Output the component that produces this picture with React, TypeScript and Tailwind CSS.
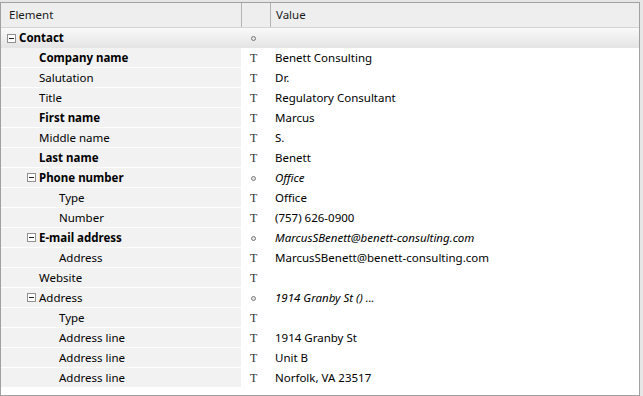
import React from "react";

type Row = {
  label: string;
  level: number;
  bold?: boolean;
  group?: boolean;
  kind: "T" | "o";
  value?: string;
  italic?: boolean;
};

const rows: Row[] = [
  { label: "Company name", level: 1, bold: true, kind: "T", value: "Benett Consulting" },
  { label: "Salutation", level: 1, kind: "T", value: "Dr." },
  { label: "Title", level: 1, kind: "T", value: "Regulatory Consultant" },
  { label: "First name", level: 1, bold: true, kind: "T", value: "Marcus" },
  { label: "Middle name", level: 1, kind: "T", value: "S." },
  { label: "Last name", level: 1, bold: true, kind: "T", value: "Benett" },
  { label: "Phone number", level: 1, bold: true, group: true, kind: "o", value: "Office", italic: true },
  { label: "Type", level: 2, kind: "T", value: "Office" },
  { label: "Number", level: 2, kind: "T", value: "(757) 626-0900" },
  { label: "E-mail address", level: 1, bold: true, group: true, kind: "o", value: "MarcusSBenett@benett-consulting.com", italic: true },
  { label: "Address", level: 2, kind: "T", value: "MarcusSBenett@benett-consulting.com" },
  { label: "Website", level: 1, kind: "T", value: "" },
  { label: "Address", level: 1, group: true, kind: "o", value: "1914 Granby St () ...", italic: true },
  { label: "Type", level: 2, kind: "T", value: "" },
  { label: "Address line", level: 2, kind: "T", value: "1914 Granby St" },
  { label: "Address line", level: 2, kind: "T", value: "Unit B" },
  { label: "Address line", level: 2, kind: "T", value: "Norfolk, VA 23517" },
];

function Minus() {
  return (
    <span className="relative inline-block w-[9px] h-[9px] border border-[#919191] bg-white mr-[3px] shrink-0">
      <span className="absolute left-[1px] top-[3px] w-[5px] h-[1px] bg-[#222]" />
    </span>
  );
}

function KindIcon({ kind }: { kind: "T" | "o" }) {
  if (kind === "T") {
    return (
      <span
        className="text-[12px] leading-none text-[#333]"
        style={{ fontFamily: '"Liberation Serif", "DejaVu Serif", serif' }}
      >
        T
      </span>
    );
  }
  return <span className="inline-block w-[5px] h-[5px] rounded-full border border-[#777] bg-[#e8e8e8] ml-[1px]" />;
}

export default function App() {
  return (
    <div
      className="w-[643px] h-[396px] bg-[#e6e6e6] pt-[2px] text-[11.5px] text-black"
      style={{ fontFamily: '"Segoe UI", "Noto Sans", sans-serif' }}
    >
      <div className="w-[640px] h-[394px] border border-[#a0a0a0] bg-white flex flex-col overflow-hidden">
        {/* header */}
        <div className="flex h-[25px] bg-[#eeeeee] border-b border-[#d5d5d5]">
          <div className="w-[241px] border-r border-[#b4b4b4] pl-[8px] flex items-center text-[#1a1a1a]">Element</div>
          <div className="w-[29px] border-r border-[#b4b4b4]" />
          <div className="flex-1 pl-[5px] flex items-center text-[#1a1a1a]">Value</div>
        </div>
        {/* contact row */}
        <div className="flex h-[20px] bg-gradient-to-b from-[#f9f9f9] to-[#e4e4e4]">
          <div className="w-[240px] flex items-center pl-[6px] font-bold">
            <Minus />
            <span>Contact</span>
          </div>
          <div className="w-[30px] flex items-center pl-[9px]">
            <KindIcon kind="o" />
          </div>
          <div className="flex-1" />
        </div>
        {rows.map((r, i) => (
          <div key={i} className="flex h-[20px]">
            <div
              className={`w-[240px] bg-[#f2f2f2] border-b border-white flex items-center ${r.bold ? "font-bold" : ""}`}
              style={{ paddingLeft: r.group ? 26 + (r.level - 1) * 20 : 18 + r.level * 20 }}
            >
              {r.group && <Minus />}
              <span>{r.label}</span>
            </div>
            <div className="w-[30px] flex items-center pl-[9px]">
              <KindIcon kind={r.kind} />
            </div>
            <div className={`flex-1 flex items-center pl-[4px] whitespace-nowrap ${r.italic ? "italic" : ""}`}>{r.value}</div>
          </div>
        ))}
      </div>
    </div>
  );
}
